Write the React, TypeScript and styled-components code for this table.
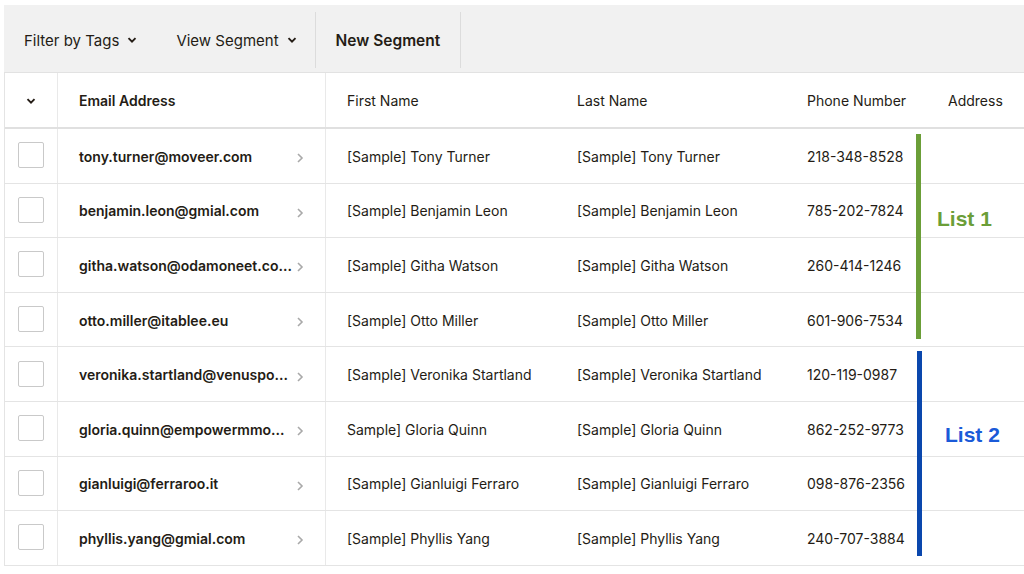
import React from "react";
import styled, { createGlobalStyle } from "styled-components";

const Global = createGlobalStyle`
  html, body { margin: 0; padding: 0; background: #fff; }
  body { font-family: "Inter", "Liberation Sans", sans-serif; color: #241c15; }
  * { box-sizing: border-box; }
`;

const Page = styled.div`
  width: 1024px;
  height: 574px;
  padding: 5px 0 0 4px;
  background: #fff;
  overflow: hidden;
  position: relative;
`;

const Toolbar = styled.div`
  display: flex;
  align-items: stretch;
  height: 68px;
  background: #f1f1f1;
  border-bottom: 1px solid #e2e2e2;
`;

const ToolItem = styled.div<{ $divider?: boolean; $bold?: boolean; $pl: number; $pr: number }>`
  display: flex;
  align-items: center;
  gap: 8px;
  padding: 0 ${(p) => p.$pr}px 0 ${(p) => p.$pl}px;
  font-size: ${(p) => (p.$bold ? 15.5 : 15)}px;
  font-weight: ${(p) => (p.$bold ? 600 : 400)};
  color: #241c15;
  border-right: 1px solid ${(p) => (p.$divider ? "#dcdcdc" : "transparent")};
  margin: 7px 0 4px;
`;

const Table = styled.div`
  border-left: 1px solid #e4e4e4;
`;

const cols = "53px 268px 230px 230px 141px 1fr";

const HeadRow = styled.div`
  display: grid;
  grid-template-columns: ${cols};
  height: 56px;
  border-bottom: 2px solid #e0e0e0;
`;

const Row = styled.div`
  display: grid;
  grid-template-columns: ${cols};
  height: 54.6px;
  border-bottom: 1px solid #e4e4e4;
`;

const Cell = styled.div<{ $divider?: boolean; $bold?: boolean; $center?: boolean }>`
  display: flex;
  align-items: center;
  justify-content: ${(p) => (p.$center ? "center" : "flex-start")};
  padding-left: ${(p) => (p.$center ? 0 : 21)}px;
  padding-top: 1px;
  border-right: ${(p) => (p.$divider ? "1px solid #e9e9e9" : "none")};
  font-size: 14px;
  font-weight: ${(p) => (p.$bold ? 600 : 400)};
  white-space: nowrap;
  min-width: 0;
`;

const EmailCell = styled(Cell)`
  padding-right: 21px;
  gap: 3px;
`;

const EmailText = styled.span`
  flex: 1;
  min-width: 0;
  font-weight: 600;
`;

const Check = styled.div`
  width: 26px;
  height: 26px;
  border: 1px solid #c9c9c9;
  border-radius: 2px;
  background: #fff;
  margin-top: -2px;
`;

const Bar = styled.div<{ $color: string; $top: number; $left: number; $h: number }>`
  position: absolute;
  left: ${(p) => p.$left}px;
  top: ${(p) => p.$top}px;
  width: 5px;
  height: ${(p) => p.$h}px;
  background: ${(p) => p.$color};
`;

const ListLabel = styled.div<{ $color: string; $top: number; $left: number }>`
  position: absolute;
  left: ${(p) => p.$left}px;
  top: ${(p) => p.$top}px;
  color: ${(p) => p.$color};
  font-family: "Liberation Sans", Arial, sans-serif;
  font-weight: 700;
  font-size: 21px;
`;

const Caret = ({ size = 10 }: { size?: number }) => (
  <svg width={size} height={size} viewBox="0 0 10 10">
    <path d="M1.5 3.2 L5 6.7 L8.5 3.2" fill="none" stroke="#241c15" strokeWidth="1.9" />
  </svg>
);

const Chevron = () => (
  <svg width="8" height="12" viewBox="0 0 8 12" style={{ marginTop: 4, flex: "none" }}>
    <path d="M2 2 L6 6 L2 10" fill="none" stroke="#a9a9a9" strokeWidth="1.6" />
  </svg>
);

const rows = [
  ["tony.turner@moveer.com", "[Sample] Tony Turner", "[Sample] Tony Turner", "218-348-8528"],
  ["benjamin.leon@gmial.com", "[Sample] Benjamin Leon", "[Sample] Benjamin Leon", "785-202-7824"],
  ["githa.watson@odamoneet.co...", "[Sample] Githa Watson", "[Sample] Githa Watson", "260-414-1246"],
  ["otto.miller@itablee.eu", "[Sample] Otto Miller", "[Sample] Otto Miller", "601-906-7534"],
  ["veronika.startland@venuspo...", "[Sample] Veronika Startland", "[Sample] Veronika Startland", "120-119-0987"],
  ["gloria.quinn@empowermmo...", "Sample] Gloria Quinn", "[Sample] Gloria Quinn", "862-252-9773"],
  ["gianluigi@ferraroo.it", "[Sample] Gianluigi Ferraro", "[Sample] Gianluigi Ferraro", "098-876-2356"],
  ["phyllis.yang@gmial.com", "[Sample] Phyllis Yang", "[Sample] Phyllis Yang", "240-707-3884"],
];

export default function App() {
  return (
    <>
      <Global />
      <Page>
        <Toolbar>
          <ToolItem $pl={20} $pr={38}>
            Filter by Tags <Caret />
          </ToolItem>
          <ToolItem $pl={0} $pr={18} $divider>
            View Segment <Caret />
          </ToolItem>
          <ToolItem $pl={20} $pr={20} $bold $divider>
            New Segment
          </ToolItem>
        </Toolbar>
        <Table>
          <HeadRow>
            <Cell $center $divider>
              <Caret />
            </Cell>
            <Cell $bold $divider>Email Address</Cell>
            <Cell>First Name</Cell>
            <Cell>Last Name</Cell>
            <Cell>Phone Number</Cell>
            <Cell>Address</Cell>
          </HeadRow>
          {rows.map((r) => (
            <Row key={r[0]}>
              <Cell $center $divider>
                <Check />
              </Cell>
              <EmailCell $divider>
                <EmailText>{r[0]}</EmailText>
                <Chevron />
              </EmailCell>
              <Cell>{r[1]}</Cell>
              <Cell>{r[2]}</Cell>
              <Cell>{r[3]}</Cell>
              <Cell />
            </Row>
          ))}
        </Table>
        <Bar $color="#6b9e38" $left={916} $top={134} $h={205} />
        <Bar $color="#0a47ad" $left={917} $top={351} $h={205} />
        <ListLabel $color="#6b9e38" $left={937} $top={207}>List 1</ListLabel>
        <ListLabel $color="#1a5ad8" $left={945} $top={423}>List 2</ListLabel>
      </Page>
    </>
  );
}
